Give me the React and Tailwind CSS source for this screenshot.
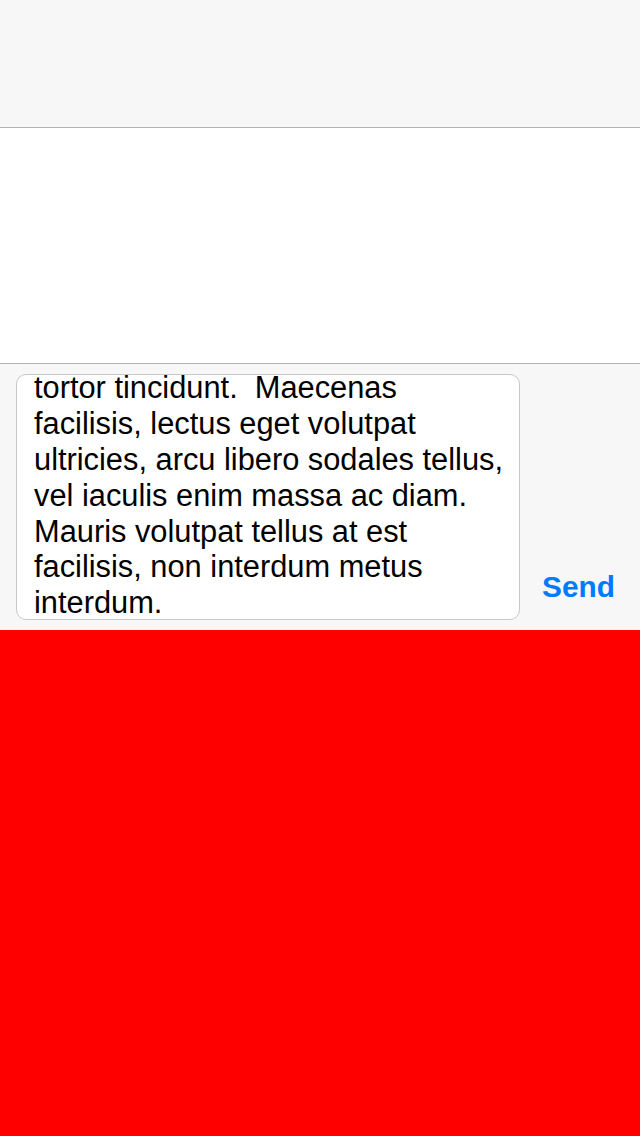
// App.jsx

import React from 'react';

const lines = [
  'tortor tincidunt.\u00a0 Maecenas',
  'facilisis, lectus eget volutpat',
  'ultricies, arcu libero sodales tellus,',
  'vel iaculis enim massa ac diam.',
  'Mauris volutpat tellus at est',
  'facilisis, non interdum metus',
  'interdum.',
];

const App = () => {
  return (
    <div
      className="w-[640px] h-[1136px] flex flex-col bg-white"
      style={{ fontFamily: '"Liberation Sans", Arial, sans-serif' }}
    >
      {/* Navigation bar */}
      <div className="h-[128px] shrink-0 bg-[#f7f7f7] border-b border-[#b2b2b2]" />

      {/* Message list */}
      <div className="h-[235px] shrink-0 bg-white" />

      {/* Input toolbar */}
      <div className="h-[267px] shrink-0 bg-[#f7f7f7] border-t border-[#b2b2b2] flex items-stretch pt-[10px] pb-[10px]">
        <div className="ml-[16px] w-[504px] bg-white border border-[#c8c7cc] rounded-[10px] overflow-hidden flex flex-col justify-end pl-[17px] pr-[6px]">
          <div className="text-[30.8px] leading-[35.8px] text-black whitespace-pre mb-[-2px]">
            {lines.map((line, i) => (
              <div key={i}>{line}</div>
            ))}
          </div>
        </div>
        <div className="flex-1 flex items-end justify-center pb-[18px] pr-[3px]">
          <button className="text-[29.8px] font-bold text-[#007aff] leading-none">Send</button>
        </div>
      </div>

      {/* Keyboard area */}
      <div className="flex-1 bg-[#ff0000]" />
    </div>
  );
};

export default App;
